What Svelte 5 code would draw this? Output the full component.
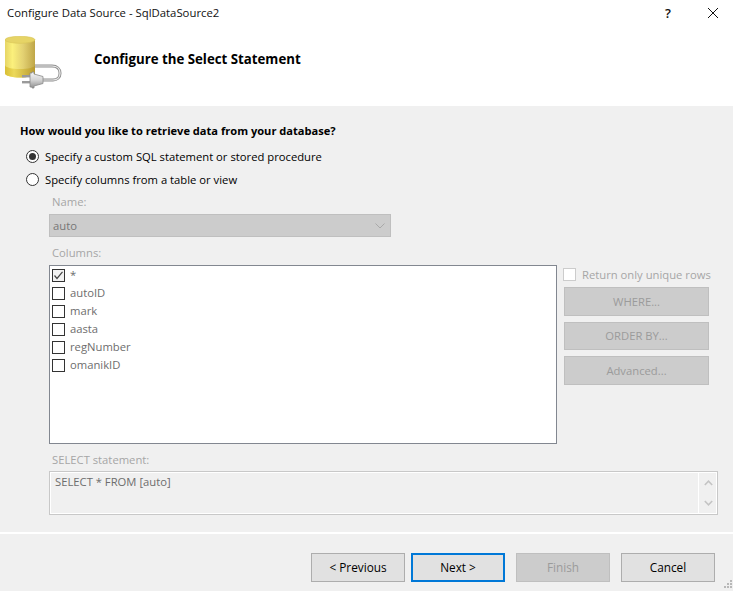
<script>
  const cols = [
    { name: '*', on: true },
    { name: 'autoID' },
    { name: 'mark' },
    { name: 'aasta' },
    { name: 'regNumber' },
    { name: 'omanikID' }
  ];
</script>

<div class="win">
  <div class="top">
    <div class="titlebar">
      <span class="title">Configure Data Source - SqlDataSource2</span>
      <span class="help">?</span>
      <svg class="close" width="12" height="12" viewBox="0 0 12 12"><path d="M1 1L11 11M11 1L1 11" stroke="#111" stroke-width="1" fill="none"/></svg>
    </div>
    <div class="banner">
      <svg class="logo" width="62" height="60" viewBox="0 0 62 60">
        <defs>
          <linearGradient id="cyl" x1="0" x2="1" y1="0" y2="0">
            <stop offset="0" stop-color="#e6d565"/>
            <stop offset="0.25" stop-color="#fbf07c"/>
            <stop offset="0.6" stop-color="#e3d172"/>
            <stop offset="1" stop-color="#bfa648"/>
          </linearGradient>
          <linearGradient id="cylb" x1="0" x2="1" y1="0" y2="0">
            <stop offset="0" stop-color="#d9bf34"/>
            <stop offset="0.3" stop-color="#ecd95a"/>
            <stop offset="1" stop-color="#b89a30"/>
          </linearGradient>
          <linearGradient id="plug" x1="0" x2="0" y1="0" y2="1">
            <stop offset="0" stop-color="#f4f4f4"/>
            <stop offset="0.5" stop-color="#d4d4d4"/>
            <stop offset="1" stop-color="#8e8e8e"/>
          </linearGradient>
        </defs>
        <path d="M30 30H47C52 30 55 33 55 37V37.500C55 41.500 52 44 48 44H38" fill="none" stroke="#8f8f8f" stroke-width="3"/>
        <path d="M30 30H47C52 30 55 33 55 37V37.500C55 41.500 52 44 48 44H38" fill="none" stroke="#ececec" stroke-width="1.200"/>
        <path d="M0 3.500V37.500C0 39.800 7 41.500 15 41.500S30 39.800 30 37.500V3.500Z" fill="url(#cyl)"/>
        <path d="M0 29V37.500C0 39.800 7 41.500 15 41.500S30 39.800 30 37.500V29C30 31.500 23 33 15 33S0 31.500 0 29Z" fill="url(#cylb)"/>
        <ellipse cx="15" cy="3.800" rx="15" ry="3.500" fill="#e6d466" stroke="#d8c455" stroke-width=".6"/>
        <rect x="17" y="39" width="9" height="2.400" fill="#9a9a9a"/>
        <rect x="17" y="45" width="9" height="2.400" fill="#9a9a9a"/>
        <path d="M25 37H27V36H29V38L38 40.500V47.500L29 50V52H27V51H25Z" fill="url(#plug)" stroke="#8a8a8a" stroke-width=".8"/>
      </svg>
      <h1>Configure the Select Statement</h1>
    </div>
  </div>

  <div class="body">
    <div class="question">How would you like to retrieve data from your database?</div>

    <div class="radio first"><span class="dot on"></span><span>Specify a custom SQL statement or stored procedure</span></div>
    <div class="radio"><span class="dot"></span><span>Specify columns from a table or view</span></div>

    <div class="section">
      <div class="lbl name-lbl">Name:</div>
      <div class="select">
        <span>auto</span>
        <svg width="10" height="6" viewBox="0 0 10 6"><path d="M.5 .5L5 5L9.500 .5" fill="none" stroke="#a9a9a9"/></svg>
      </div>
      <div class="lbl col-lbl">Columns:</div>

      <div class="cols">
        <div class="list">
          {#each cols as c}
            <div class="row">
              <span class="cb">
                {#if c.on}
                  <svg width="11" height="11" viewBox="0 0 11 11"><path d="M1.500 5.500L4 8.500L9.500 1.800" fill="none" stroke="#444" stroke-width="1.200"/></svg>
                {/if}
              </span>
              <span class="rowtext">{c.name}</span>
            </div>
          {/each}
        </div>
        <div class="side">
          <div class="unique"><span class="cb2"></span><span>Return only unique rows</span></div>
          <div class="sbtn b1">WHERE...</div>
          <div class="sbtn b2">ORDER BY...</div>
          <div class="sbtn b3">Advanced...</div>
        </div>
      </div>

      <div class="lbl sel-lbl">SELECT statement:</div>
      <div class="stmt">
        <div class="stmt-text">SELECT * FROM [auto]</div>
        <div class="scroll">
          <svg width="9" height="6" viewBox="0 0 9 6"><path d="M.8 5L4.500 1.200L8.200 5" fill="none" stroke="#c4c4c4" stroke-width="1.600"/></svg>
          <svg width="9" height="6" viewBox="0 0 9 6"><path d="M.8 1L4.500 4.800L8.200 1" fill="none" stroke="#c4c4c4" stroke-width="1.600"/></svg>
        </div>
      </div>
    </div>
  </div>

  <div class="foot">
    <div class="btn">&lt; Previous</div>
    <div class="btn primary">Next &gt;</div>
    <div class="btn disabled">Finish</div>
    <div class="btn cancel">Cancel</div>
    <svg class="grip" width="12" height="12" viewBox="0 0 12 12" fill="#b8b8b8">
      <rect x="9" y="1" width="2" height="2"/><rect x="6" y="4" width="2" height="2"/><rect x="9" y="4" width="2" height="2"/>
      <rect x="3" y="7" width="2" height="2"/><rect x="6" y="7" width="2" height="2"/><rect x="9" y="7" width="2" height="2"/>
    </svg>
  </div>
</div>

<style>
  :global(body) { margin: 0; background: #f0f0f0; }
  .win {
    width: 733px;
    height: 591px;
    overflow: hidden;
    position: relative;
    background: #f0f0f0;
    font-family: "Open Sans", "Noto Sans", sans-serif;
    font-size: 11.25px;
    color: #000;
  }
  .top { height: 106px; background: #fff; }
  .titlebar { height: 25px; display: flex; align-items: center; padding-left: 7px; }
  .title { flex: 1; font-size: 11.35px; color: #111; }
  .help { width: 20px; font-size: 13px; margin-right: 22px; color: #111; font-weight: 600; }
  .close { margin-right: 14px; }
  .banner { display: flex; align-items: flex-start; padding: 11px 0 0 5px; }
  .logo { display: block; flex: none; }
  h1 { margin: 14px 0 0 27px; font-size: 13.25px; line-height: 18px; font-weight: 700; }

  .body { height: 426px; padding: 16px 15px 0 20px; box-sizing: border-box; }
  .question { font-weight: 700; line-height: 18px; font-size: 11.1px; }
  .radio { display: flex; align-items: center; gap: 6px; height: 23px; padding-left: 6px; }
  .radio.first { margin-top: 5px; }
  .dot {
    width: 13px; height: 13px; box-sizing: border-box; border-radius: 50%;
    border: 1px solid #333; background: #fff; display: flex; align-items: center; justify-content: center;
  }
  .dot.on::after { content: ""; width: 7px; height: 7px; border-radius: 50%; background: #333; }

  .section { padding-left: 29px; }
  .lbl { color: #a6a6a6; padding-left: 3px; line-height: 16px; }
  .name-lbl { margin-top: 3px; }
  .select {
    width: 342px; height: 23px; margin-top: 4px; box-sizing: border-box;
    background: #cccccc; border: 1px solid #bfbfbf; color: #777;
    display: flex; align-items: center; justify-content: space-between; padding: 0 5px 0 3px;
  }
  .col-lbl { margin-top: 8px; }
  .cols { display: flex; margin-top: 4px; }
  .list {
    width: 508px; height: 179px; box-sizing: border-box;
    border: 1px solid #828790; background: #fff;
  }
  .row { height: 18px; display: flex; align-items: center; padding-left: 2px; }
  .cb {
    width: 13px; height: 13px; box-sizing: border-box; border: 1px solid #333; background: #fff;
    display: flex; align-items: center; justify-content: center; flex: none;
  }
  .row:first-child .cb { background: #f2f2f2; }
  .rowtext { margin: 0 0 2px 5px; color: #6d6d6d; }
  .side { width: 160px; padding-left: 6px; box-sizing: border-box; }
  .unique { display: flex; align-items: center; gap: 6px; height: 18px; color: #a6a6a6; white-space: nowrap; }
  .cb2 { width: 13px; height: 13px; box-sizing: border-box; border: 1px solid #ccc; background: #fff; flex: none; }
  .sbtn {
    width: 145px; box-sizing: border-box; margin-left: 1px;
    background: #cccccc; border: 1px solid #bfbfbf; color: #9b9b9b;
    display: flex; align-items: center; justify-content: center;
  }
  .b1 { height: 29px; margin-top: 4px; }
  .b2 { height: 28px; margin-top: 6px; padding-bottom: 2px; }
  .b3 { height: 29px; margin-top: 6px; }
  .sel-lbl { margin-top: 8px; }
  .stmt {
    width: 669px; height: 44px; margin-top: 3px; box-sizing: border-box;
    border: 1px solid #c8c8c8; display: flex; box-shadow: inset 0 0 0 1px #fff;
  }
  .stmt-text { flex: 1; padding: 2px 0 0 5px; color: #6d6d6d; line-height: 16px; }
  .scroll {
    width: 19px; box-sizing: border-box; border-left: 1px solid #fff;
    display: flex; flex-direction: column; align-items: center; justify-content: space-between; padding: 8px 0;
  }

  .foot {
    height: 59px; box-sizing: border-box; border-top: 2px solid #fff;
    display: flex; padding: 19px 0 0 311px; position: relative;
  }
  .btn {
    width: 94px; height: 29px; box-sizing: border-box; padding-bottom: 2px;
    background: #e1e1e1; border: 1px solid #adadad; color: #000;
    display: flex; align-items: center; justify-content: center;
    margin-right: 6px; font-size: 11.8px;
  }
  .primary { border: 2px solid #0078d7; margin-right: 11px; }
  .disabled { background: #cccccc; border-color: #bfbfbf; color: #9b9b9b; margin-right: 11px; }
  .cancel { margin-right: 0; }
  .grip { position: absolute; right: 0; bottom: 0; }
</style>
